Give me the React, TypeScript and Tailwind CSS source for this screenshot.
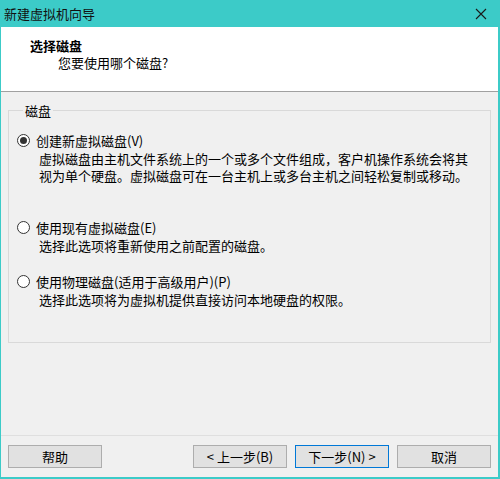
import React from "react";

const font = { fontFamily: '"Noto Sans CJK SC", "Liberation Sans", sans-serif' };

const Radio = ({ checked }: { checked?: boolean }) => (
  <span className="w-[13px] h-[13px] rounded-full border border-[#333333] bg-white flex items-center justify-center shrink-0">
    {checked && <span className="w-[7px] h-[7px] rounded-full bg-[#333333]" />}
  </span>
);

const options = [
  {
    label: "创建新虚拟磁盘(V)",
    desc: [
      "虚拟磁盘由主机文件系统上的一个或多个文件组成，客户机操作系统会将其",
      "视为单个硬盘。虚拟磁盘可在一台主机上或多台主机之间轻松复制或移动。",
    ],
    checked: true,
    gap: "mb-[35px]",
  },
  {
    label: "使用现有虚拟磁盘(E)",
    desc: ["选择此选项将重新使用之前配置的磁盘。"],
    gap: "mb-[19px]",
  },
  {
    label: "使用物理磁盘(适用于高级用户)(P)",
    desc: ["选择此选项将为虚拟机提供直接访问本地硬盘的权限。"],
    gap: "",
  },
];

export default function App() {
  return (
    <div
      style={font}
      className="w-[500px] h-[479px] flex flex-col bg-[#f0f0f0] border-l border-r-2 border-b-2 border-[#3ccbc8] text-[13px] leading-[17px] text-[#000000]"
    >
      {/* title bar */}
      <div className="h-[27px] bg-[#3ccbc8] flex items-center justify-between pl-[3px] pr-[11px] shrink-0">
        <span className="text-[13px] text-[#111111]">新建虚拟机向导</span>
        <svg width="12" height="12" viewBox="0 0 12 12">
          <path d="M1 1 L11 11 M11 1 L1 11" stroke="#1a1a1a" strokeWidth="1.1" />
        </svg>
      </div>

      {/* header */}
      <div className="h-[65px] bg-white border-b border-[#a0a0a0] shrink-0 pt-[10px]">
        <div className="pl-[29px] font-bold">选择磁盘</div>
        <div className="pl-[57px]">您要使用哪个磁盘?</div>
      </div>

      {/* body */}
      <div className="flex-1 px-[7px] pt-[10px]">
        <fieldset className="border border-[#d9d9d9] h-[241px] px-[8px]">
          <legend className="ml-[6px] px-[2px]">磁盘</legend>
          <div className="pt-[13px] flex flex-col">
            {options.map((o, i) => (
              <div key={i} className={o.gap}>
                <div className="flex items-center gap-[6px]">
                  <Radio checked={o.checked} />
                  <span>{o.label}</span>
                </div>
                <div className="pl-[22px] mt-[1px]">
                  {o.desc.map((d, j) => (
                    <div key={j} className="h-[17px] overflow-visible">{d}</div>
                  ))}
                </div>
              </div>
            ))}
          </div>
        </fieldset>
      </div>

      {/* footer */}
      <div className="h-[42px] border-t border-[#dfdfdf] flex items-start pt-[9px] px-[7px] shrink-0">
        <button className="w-[94px] h-[23px] bg-[#e1e1e1] border border-[#adadad]">帮助</button>
        <div className="flex-1" />
        <div className="flex gap-[8px]">
          <button className="w-[94px] h-[23px] bg-[#e1e1e1] border border-[#adadad]">&lt; 上一步(B)</button>
          <button className="w-[94px] h-[23px] bg-[#e1e1e1] border border-[#0078d7]">下一步(N) &gt;</button>
          <button className="w-[94px] h-[23px] bg-[#e1e1e1] border border-[#adadad]">取消</button>
        </div>
      </div>
    </div>
  );
}
